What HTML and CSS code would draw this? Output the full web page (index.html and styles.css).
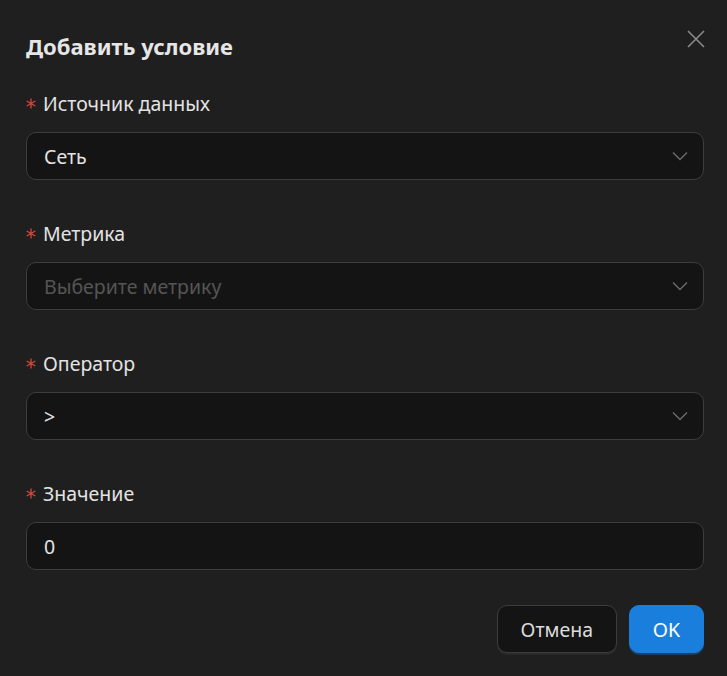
FILE: index.html
```html
<!DOCTYPE html>
<html lang="ru">
<head>
    <meta charset="UTF-8">
    <title>Добавить условие</title>
    <link rel="stylesheet" href="styles.css">
</head>
<body>

<div class="dialog">
    <div class="dialog-header">
        <h2>Добавить условие</h2>
        <button class="close" aria-label="Закрыть">
            <svg width="20" height="20" viewBox="0 0 20 20"><path d="M2 2L18 18M18 2L2 18" stroke="currentColor" stroke-width="1.6" fill="none"/></svg>
        </button>
    </div>

    <div class="form-item">
        <label><svg class="req" width="10" height="11" viewBox="0 0 10 11"><path d="M5 0.5V10.5M0.7 3L9.3 8M0.7 8L9.3 3" stroke="currentColor" stroke-width="1.3" fill="none"/></svg>Источник данных</label>
        <div class="select">
            <span class="value">Сеть</span>
            <svg class="arrow" width="16" height="10" viewBox="0 0 16 10"><path d="M1 1.5L8 8.5L15 1.5" stroke="currentColor" stroke-width="1.4" fill="none"/></svg>
        </div>
    </div>

    <div class="form-item">
        <label><svg class="req" width="10" height="11" viewBox="0 0 10 11"><path d="M5 0.5V10.5M0.7 3L9.3 8M0.7 8L9.3 3" stroke="currentColor" stroke-width="1.3" fill="none"/></svg>Метрика</label>
        <div class="select">
            <span class="value placeholder">Выберите метрику</span>
            <svg class="arrow" width="16" height="10" viewBox="0 0 16 10"><path d="M1 1.5L8 8.5L15 1.5" stroke="currentColor" stroke-width="1.4" fill="none"/></svg>
        </div>
    </div>

    <div class="form-item">
        <label><svg class="req" width="10" height="11" viewBox="0 0 10 11"><path d="M5 0.5V10.5M0.7 3L9.3 8M0.7 8L9.3 3" stroke="currentColor" stroke-width="1.3" fill="none"/></svg>Оператор</label>
        <div class="select">
            <span class="value">&gt;</span>
            <svg class="arrow" width="16" height="10" viewBox="0 0 16 10"><path d="M1 1.5L8 8.5L15 1.5" stroke="currentColor" stroke-width="1.4" fill="none"/></svg>
        </div>
    </div>

    <div class="form-item last">
        <label><svg class="req" width="10" height="11" viewBox="0 0 10 11"><path d="M5 0.5V10.5M0.7 3L9.3 8M0.7 8L9.3 3" stroke="currentColor" stroke-width="1.3" fill="none"/></svg>Значение</label>
        <input type="text" value="0">
    </div>

    <div class="footer">
        <button class="btn">Отмена</button>
        <button class="btn primary">OK</button>
    </div>
</div>

</body>
</html>
```

FILE: styles.css
```css
* {
    box-sizing: border-box;
    margin: 0;
    padding: 0;
}

body {
    font-family: "Noto Sans", "Open Sans", sans-serif;
    background-color: #1f1f1f;
    color: #e3e3e3;
    width: 727px;
    height: 676px;
    overflow: hidden;
}

.dialog {
    padding: 32px 23px 0 26px;
}

.dialog-header {
    display: flex;
    justify-content: space-between;
    align-items: center;
    height: 28px;
    margin-bottom: 32px;
}

h2 {
    font-size: 22px;
    font-weight: 700;
    color: #e6e6e6;
    line-height: 28px;
}

.close {
    background: none;
    border: none;
    color: #8a8a8a;
    width: 20px;
    height: 20px;
    margin-right: -2px;
    margin-top: -14px;
    cursor: pointer;
}

.form-item {
    margin-bottom: 42px;
}

.form-item.last {
    margin-bottom: 35px;
}

label {
    display: flex;
    align-items: center;
    font-size: 19.5px;
    line-height: 24px;
    height: 24px;
    margin-bottom: 16px;
    color: #e3e3e3;
}

.req {
    color: #d3473f;
    flex-shrink: 0;
    margin-right: 7px;
    margin-top: -2px;
}

.select,
input {
    display: flex;
    align-items: center;
    justify-content: space-between;
    width: 100%;
    height: 48px;
    padding: 0 17px;
    background-color: #141414;
    border: 1px solid #3d3d3d;
    border-radius: 10px;
    font-family: inherit;
    font-size: 19.5px;
    color: #e3e3e3;
    outline: none;
}

.placeholder {
    color: #555;
}

.arrow {
    color: #6b6b6b;
    margin-right: -2px;
}

.footer {
    display: flex;
    justify-content: flex-end;
    gap: 12px;
}

.btn {
    height: 48px;
    padding: 0 23px;
    font-family: inherit;
    font-size: 19.5px;
    color: #dcdcdc;
    background-color: #141414;
    border: 1px solid #3d3d3d;
    border-radius: 10px;
    box-shadow: 0 2px 0 #2a2a2a;
    cursor: pointer;
}

.btn.primary {
    width: 75px;
    padding: 0;
    color: #fff;
    background-color: #1a7fdc;
    border-color: #1a7fdc;
    box-shadow: 0 2px 0 #1c3f63;
}
```
